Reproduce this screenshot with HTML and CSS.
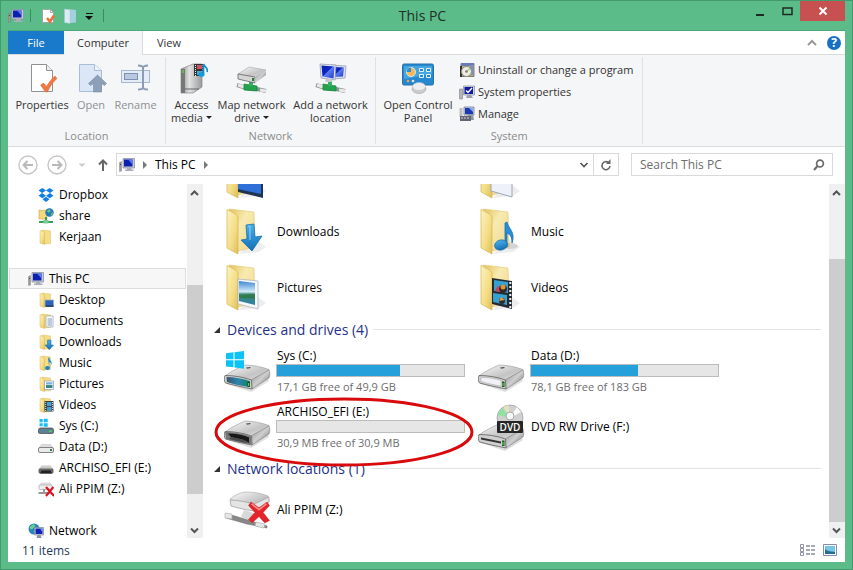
FILE: index.html
```html
<!DOCTYPE html>
<html lang="en">
<head>
<meta charset="utf-8">
<title>This PC</title>
<link rel="stylesheet" href="styles.css">
</head>
<body>
<svg class="defs" aria-hidden="true">
  <defs>
    <linearGradient id="gFront" x1="0" y1="0" x2="1" y2="1"><stop offset="0" stop-color="#fdf3bd"/><stop offset=".6" stop-color="#f3dc85"/><stop offset="1" stop-color="#dfbe58"/></linearGradient>
    <linearGradient id="gBack" x1="0" y1="0" x2="1" y2="1"><stop offset="0" stop-color="#e3c25f"/><stop offset=".4" stop-color="#f8eab0"/><stop offset="1" stop-color="#ecd68a"/></linearGradient>
    <linearGradient id="gTop" x1="0" y1="0" x2="1" y2="1"><stop offset="0" stop-color="#fafafa"/><stop offset=".6" stop-color="#c4c4c4"/><stop offset="1" stop-color="#e9e9e9"/></linearGradient>
    <linearGradient id="gSide" x1="0" y1="0" x2="1" y2="1"><stop offset="0" stop-color="#8a8a8a"/><stop offset=".5" stop-color="#cfcfcf"/><stop offset="1" stop-color="#5d5d5d"/></linearGradient>
    <linearGradient id="gTeal" x1="0" y1="0" x2="1" y2="0"><stop offset="0" stop-color="#38536c"/><stop offset=".5" stop-color="#2b86ad"/><stop offset="1" stop-color="#16806a"/></linearGradient>
    <linearGradient id="gBlue" x1="0" y1="0" x2="0" y2="1"><stop offset="0" stop-color="#4ab0ea"/><stop offset="1" stop-color="#126fb8"/></linearGradient>
    <linearGradient id="gScreen" x1="0" y1="0" x2="1" y2="1"><stop offset="0" stop-color="#0a1fae"/><stop offset=".45" stop-color="#0f24c4"/><stop offset=".5" stop-color="#5d7df0"/><stop offset="1" stop-color="#1c35c9"/></linearGradient>
    <linearGradient id="gPhoto" x1="0" y1="0" x2="0" y2="1"><stop offset="0" stop-color="#3f87d4"/><stop offset=".45" stop-color="#d4ecfa"/><stop offset=".55" stop-color="#3d8a70"/><stop offset="1" stop-color="#2f7fae"/></linearGradient>
    <linearGradient id="gTower" x1="0" y1="0" x2="1" y2="0"><stop offset="0" stop-color="#8d8d8d"/><stop offset=".4" stop-color="#e2e2e2"/><stop offset="1" stop-color="#9a9a9a"/></linearGradient>
  </defs>

  <symbol id="pc" viewBox="0 0 16 16">
    <path d="M.5 5.500l2-1v9.500l-2 .5z" fill="#9a9a9a" stroke="#777" stroke-width=".4"/><path d="M1 7.500h1" stroke="#444"/>
    <path d="M4 1.500h11.500v9.500H4z" fill="#c3c9d6" stroke="#8d93a5" stroke-width=".8"/>
    <path d="M5 2.500h8.500v7H5z" fill="#0d1fae"/><path d="M9 2.500h4.500v5z" fill="#5c7bea"/>
    <path d="M8 11h4l.5 1.500h2V14H6v-1.500h2z" fill="#a9adb8"/>
  </symbol>
  <symbol id="folder" viewBox="0 0 16 16">
    <path d="M4 1l8.500 1v12.500l-6 .5z" fill="#f4dd86" stroke="#dcbf64" stroke-width=".5"/>
    <path d="M2 1.500L6.500 3v12.500L2 14z" fill="url(#gFront)" stroke="#d8b856" stroke-width=".5"/>
  </symbol>
  <symbol id="s-desktop" viewBox="0 0 16 16"><use href="#folder"/><path d="M7 8h8.500v6H7z" fill="#2a63b8" stroke="#a5adba" stroke-width=".8"/><path d="M7.500 13h8v2h-8z" fill="#294b77"/></symbol>
  <symbol id="s-docs" viewBox="0 0 16 16"><use href="#folder"/><path d="M8 3h7v11H8z" fill="#fff" stroke="#8fa4c2" stroke-width=".7"/><path d="M9.500 6h4.500M9.500 8h4.500M9.500 10h4.500M9.500 12h4.500" stroke="#5d7ca8" stroke-width=".8"/></symbol>
  <symbol id="s-down" viewBox="0 0 16 16"><use href="#folder"/><path d="M9.500 6h3.500v5h2.500L11.300 15.700 7 11h2.500z" fill="url(#gBlue)" stroke="#17639f" stroke-width=".5"/></symbol>
  <symbol id="s-music" viewBox="0 0 16 16"><use href="#folder"/><path d="M10 3l1.200-.4c0 3 3.800 3.400 2.300 8 .3-2.400-1-3-2.200-3.600V13" fill="#238ad0"/><ellipse cx="9.500" cy="13" rx="2.500" ry="2" fill="#1f82ca"/></symbol>
  <symbol id="s-pics" viewBox="0 0 16 16"><use href="#folder"/><path d="M6.500 5h9v8.500h-9z" fill="#fff" stroke="#8e9bad" stroke-width=".7"/><path d="M8 6.500h6.500v5.500H8z" fill="url(#gPhoto)"/></symbol>
  <symbol id="s-video" viewBox="0 0 16 16"><use href="#folder"/><path d="M6.500 4h9v10.500h-9z" fill="#353e48"/><path d="M9 5h4.500v4H9zM9 10h4.500v4H9z" fill="#4aa0cd"/><path d="M7.700 5v9M14.600 5v9" stroke="#e6e6e6" stroke-dasharray="1 1"/></symbol>
  <symbol id="dropbox" viewBox="0 0 16 16"><path fill="#0d7de8" d="M4.500 1L8 3.600 4 6.100.5 3.600zM11.500 1L15.500 3.600 12 6.100 8 3.600zM.5 8.700L4 6.100 8 8.700 4.500 11.300zM12 6.100l3.500 2.600-4 2.600L8 8.700zM4.500 12.200L8 9.700l3.500 2.500L8 15z"/></symbol>
  <symbol id="share" viewBox="0 0 16 16"><path d="M1 2l3 .6 5-.6v9H1z" fill="#f2d77c" stroke="#c9a646" stroke-width=".6"/><circle cx="11.500" cy="4.500" r="4.200" fill="#2378bb"/><path d="M8.500 3l3-2 1.500 2-2 2zm4 3l2-2 .5 2-2 2z" fill="#63c183"/><path d="M8 9v4" stroke="#3a9b57" stroke-width="2"/><path d="M1 14h14" stroke="#39a05b" stroke-width="2"/><path d="M5.500 12h5v3.500h-5z" fill="#7dc993"/></symbol>
  <symbol id="s-drive" viewBox="0 0 16 16"><path d="M3.500 5.500h9l3 4H.5z" fill="#ddd" stroke="#bbb" stroke-width=".5"/><rect x=".5" y="8.500" width="15" height="5" rx="1.500" fill="#e9e9e9" stroke="#777" stroke-width=".9"/><path d="M12 10h2v2h-2z" fill="#2c7c4c"/></symbol>
  <symbol id="s-sys" viewBox="0 0 16 16"><path d="M1.500 1h3.200v3.200H1.500zM5.700.7h4v3.500h-4zM1.500 5.200h3.200v3H1.500zM5.700 5.200h4v3.500h-4z" fill="#19bdf0"/><path d="M2 9h12l1.500 2H.5z" fill="#b8bcc0"/><rect x=".5" y="10.500" width="15" height="5" rx="1.300" fill="#5c8197" stroke="#555" stroke-width=".8"/><path d="M11 12.500h3v1.500h-3z" fill="#47d25c"/></symbol>
  <symbol id="s-slot" viewBox="0 0 16 16"><path d="M3.500 5.500h9l3 4H.5z" fill="#ccc"/><rect x=".5" y="8.500" width="15" height="5" rx="1.500" fill="#666"/><path d="M2 13.500l1.500-3h9l1.500 3z" fill="#222"/></symbol>
  <symbol id="cross" viewBox="0 0 20 20"><path d="M3 1l7 5 7-5 2 3-5.500 6L19 17l-4 2-5-5.500L4 19l-3-3 5.500-6L1 4z" fill="#e3242a" stroke="#c9262b" stroke-width=".6"/><path d="M3.500 2.500l6.500 5 6.500-5" fill="none" stroke="#ff8b85" stroke-width="1.500"/></symbol>
  <symbol id="s-netx" viewBox="0 0 16 16"><path d="M3 1.500h9l2 3H1z" fill="#ddd"/><rect x="1" y="4" width="13" height="4.500" rx="1" fill="#eee" stroke="#aaa" stroke-width=".7"/><path d="M.5 12h11M6 8v4" stroke="#999" stroke-width="2"/><path d="M8 6l8 9M15.500 6L8 15" stroke="#df1420" stroke-width="2.200"/></symbol>
  <symbol id="network" viewBox="0 0 16 16"><circle cx="6" cy="6" r="5.500" fill="#2387b8"/><path d="M1.500 4l4-3 2 2-3 3-2 .5zm4 4l3-1 1 3-3 1z" fill="#68cf91"/><path d="M6.500 4.500h9v7.500h-9z" fill="#d7dbe5" stroke="#777f98" stroke-width=".7"/><path d="M7.500 5.500h7v5.500h-7z" fill="#0f22b8"/><path d="M12 5.500h2.500v4z" fill="#7290ed"/><path d="M9.500 12h3l1 3h-5z" fill="#8a92a5"/></symbol>
  <symbol id="s-props" viewBox="0 0 16 16"><path d="M1.500 1.500h8l3 3v10h-11z" fill="#fff" stroke="#9a9a9a" stroke-width=".8"/><path d="M9.500 1.500v3h3" fill="none" stroke="#9a9a9a" stroke-width=".8"/><path d="M6 10l3 3.500L13 7.500" fill="none" stroke="#e8703a" stroke-width="2.600"/></symbol>
  <symbol id="s-newfolder" viewBox="0 0 16 16"><path d="M4 1l9 1v12.500L7 15z" fill="#a4cfdc"/><path d="M1.500 1L7 2v13.500L1.500 14.500z" fill="#dcebf6" stroke="#a8c3d6" stroke-width=".5"/></symbol>

  <symbol id="bigfolder" viewBox="0 0 48 48">
    <path d="M30 30l12 9-7 5-20 2z" fill="#000" opacity=".07"/>
    <path d="M5 1l25 3 1 35-17 4z" fill="url(#gBack)" stroke="#e0c675" stroke-width=".6"/>
    <path d="M3 1.500c6 3 10 5 11 7.500v37L3 40z" fill="url(#gFront)" stroke="#d6b552" stroke-width=".7"/>
  </symbol>
  <symbol id="b-desktop" viewBox="0 0 48 48"><use href="#bigfolder"/><path d="M14 20l25-3v29l-25-6z" fill="#20344f"/><path d="M14 22l23-3v23l-23-5z" fill="#2f6fd8"/></symbol>
  <symbol id="b-docs" viewBox="0 0 48 48"><use href="#bigfolder"/><path d="M13 12l21-2v35l-21-6z" fill="#eef1f8" stroke="#9aa5bb"/></symbol>
  <symbol id="b-down" viewBox="0 0 48 48"><use href="#bigfolder"/><path d="M22 17l8-1 1 13 7-1-10 15-11-11 6-1z" fill="url(#gBlue)" stroke="#0f67a8" stroke-width=".7"/><path d="M24 18.500l2-.5v14" fill="none" stroke="#8fd3f5"/></symbol>
  <symbol id="b-music" viewBox="0 0 48 48"><use href="#bigfolder"/><ellipse cx="32" cy="38" rx="8" ry="3" opacity=".1"/><path d="M27 15l2-1c1 6 9 10 5 21 0-6-2-9-5-10v14h-2z" fill="#2490dc" stroke="#0f66ab" stroke-width=".7"/><ellipse cx="23" cy="37" rx="6.500" ry="5" transform="rotate(-15 23 37)" fill="url(#gBlue)" stroke="#1165a6" stroke-width=".7"/></symbol>
  <symbol id="b-pics" viewBox="0 0 48 48"><use href="#bigfolder"/><path d="M14 15l20 2v28l-20-5z" fill="#f6f8fa" stroke="#a5adb7" stroke-width=".7"/><path d="M15 17l16 2v22l-16-4z" fill="url(#gPhoto)"/><path d="M15 31c5 2 10-3 16 0v4c-6-2-11 1-16-2z" fill="#2f7b4c"/></symbol>
  <symbol id="b-video" viewBox="0 0 48 48"><use href="#bigfolder"/><path d="M14 14l20 3v28l-20-5z" fill="#252a30"/><path d="M16 16l14 2v11l-14-2zM15 29l14 2v10l-14-3z" fill="#36a0d0"/><circle cx="25" cy="25" r="4" fill="#302a25"/><circle cx="25" cy="23" r="2.500" fill="#e89034"/><circle cx="24" cy="37" r="3" fill="#302a25"/><path d="M17 27l3-6 2 7z" fill="#d43d54"/><path d="M21 37l2-4 4 3z" fill="#ec9c35"/><path d="M32.300 18v26" stroke="#f1f1f1" stroke-width="2" stroke-dasharray="2 2"/></symbol>

  <symbol id="drivebody" viewBox="0 0 48 48">
    <path d="M3 37l24 8 18-11-2-3z" opacity=".13"/>
    <path d="M1 29c5-4 13-8 20-11 8 0 17 2 24 4.500v1L27 34z" fill="url(#gTop)" stroke="#999" stroke-width=".6"/>
    <path d="M27 33l18-10c1 2 1 6 0 8L28 42z" fill="url(#gSide)" stroke="#777" stroke-width=".5"/>
    <path d="M1 28.500c9 0 18 1.500 26.500 4.500L28 42C18 40 9 38 1.500 36 0 34 0 31 1 28.500z" fill="#cfcfcf" stroke="#6b6b6b" stroke-width=".9"/>
    <path d="M22 20.500l4-.5 1 1-4 .8z" fill="#555"/>
  </symbol>
  <symbol id="b-drive" viewBox="0 0 48 48"><use href="#drivebody"/><path d="M3 30.500c7 0 14 1 20 3v5.500C16 38 9 36 3 34.500z" fill="#f1f1f7" stroke="#aaa" stroke-width=".5"/><path d="M24 34.500h2.500v5.500H24z" fill="#1d5c25"/><path d="M25 36v3" stroke="#6fe05b"/></symbol>
  <symbol id="b-sys" viewBox="0 0 48 48"><use href="#drivebody"/><path d="M2.500 30c7 0 15 1.500 23 4v6C17 39 9 37 3 35z" fill="url(#gTeal)"/><path d="M23.500 34.500H26v5.500h-2.500z" fill="#174b24"/><path d="M24.700 36v3" stroke="#5fe94b"/><path d="M2 6.300l7.500-1v7H2zM10.500 5.200L20 4v8.300h-9.500zM2 13.300h7.500v7L2 19.400zM10.500 13.300H20v8.400l-9.500-1.300z" fill="#0cc3f7"/></symbol>
  <symbol id="b-slot" viewBox="0 0 48 48"><use href="#drivebody"/><path d="M1 29c9 0 18 1.500 26 4.500l.5 8C18 40 9 38 2 36z" fill="#777"/><path d="M4 30.500c8 0 15 1.500 21 4v5.500l-5-3-13-3z" fill="#181818"/><path d="M7 34l13 3 4 3.500L5 36z" fill="#4a4a4a"/></symbol>
  <symbol id="b-netx" viewBox="0 0 48 48"><path d="M6 13c5-4 9-6 15-7 8 0 16 1 23 4l1 5-15 9z" fill="url(#gTop)" stroke="#aaa" stroke-width=".6"/><path d="M6 14c8 0 16 2 24 4l15-7v5l-15 9c-8-1-16-3-23-5z" fill="#e4e4e4" stroke="#999" stroke-width=".7"/><path d="M20 24l13 4-8 6-8-3z" fill="#d8d8d8"/><path d="M2 28l9 2 16 5 16 5v2l-20-4L2 32z" fill="#888" stroke="#666" stroke-width=".5"/><path d="M1 27l7 1v5l-7-1zM32 36l9 2-1 4-9-2z" fill="#e6e6e6" stroke="#aaa" stroke-width=".6"/><use href="#cross" x="23" y="15" width="24" height="23"/></symbol>

  <symbol id="r-props" viewBox="0 0 32 32"><path d="M5.500 2.500h15l6 6v21h-21z" fill="#fff" stroke="#919191"/><path d="M20.500 2.500v6h6" fill="#eee" stroke="#919191"/><path d="M14.500 23l3-2 3 3.500c2.500-4 5-8 8.500-10.500l2 2.500c-4 3.500-7 8-9.500 13.500h-2z" fill="#ed7842" stroke="#d96431" stroke-width=".5"/></symbol>
  <symbol id="r-open" viewBox="0 0 32 32"><path d="M4.500 2.500h15l7 6v21h-22z" fill="#dbe7f6" stroke="#a9bdd7"/><path d="M19.500 2.500v6h7" fill="#eef4fb" stroke="#a9bdd7"/><path d="M22.500 13l9 8.500-2 2-3-2V30h-8v-8.500l-3 2-2-2z" fill="#8e9fb8" stroke="#7789a4" stroke-width=".6"/></symbol>
  <symbol id="r-rename" viewBox="0 0 32 32"><rect x="1.500" y="8.500" width="28" height="12" fill="#e3ecf7" stroke="#a7b7cd"/><rect x="4.500" y="11.500" width="13" height="6" fill="#b9c8df" stroke="#7b91b5"/><path d="M18 3.500c3 0 5 .5 5 2.500v19c0 2-2 2.500-5 2.500M28 3.500c-3 0-5 .5-5 2.500v19c0 2 2 2.500 5 2.500" fill="none" stroke="#8c9cb5" stroke-width="2"/></symbol>
  <symbol id="r-media" viewBox="0 0 32 32"><path d="M5 7L17 2h9v23l-9 6H5z" fill="url(#gTower)" stroke="#868686" stroke-width=".7"/><path d="M5 7h4v24H5z" fill="#777"/><path d="M6 8h2v3H6z" fill="#5fbe4a"/><path d="M9 27h14" stroke="#666"/><path d="M18 2h10v12H18z" fill="#343434"/><path d="M21 3h5v4h-5z" fill="#cf5362"/><path d="M21 9h5v4h-5z" fill="#49a9d5"/><path d="M19.500 3v11M27 3v11" stroke="#eee" stroke-dasharray="1 1"/><path d="M27.500 12V2c.5 3 5.500 4 3.500 8" fill="none" stroke="#0b8ed4" stroke-width="1.600"/><ellipse cx="25.500" cy="12.500" rx="3" ry="2.300" fill="#119ce0"/></symbol>
  <symbol id="r-cable" viewBox="0 0 32 32"><path d="M1 23l9 3 11 1 9 2" fill="none" stroke="#8b9690" stroke-width="4"/><path d="M2 23l6 2M24 28l6 1" stroke="#e7e9e8" stroke-width="3"/><path d="M8 22l13 2v5l-13-1z" fill="#22a44e" stroke="#178039" stroke-width=".7"/><path d="M13 18h4v6h-4z" fill="#36ae5c"/></symbol>
  <symbol id="r-map" viewBox="0 0 32 32"><use href="#r-cable"/><path d="M2 12L13 5l17 3-11 8z" fill="url(#gTop)" stroke="#999" stroke-width=".5"/><path d="M2 12l17 3v6L2 17z" fill="#d5d5d5" stroke="#666" stroke-width=".8"/><path d="M19 15l11-7v5l-11 8z" fill="url(#gSide)"/><path d="M16 16h2v3h-2z" fill="#2d7c34"/></symbol>
  <symbol id="r-addloc" viewBox="0 0 32 32"><use href="#r-cable"/><path d="M16 3l15 1-1 12-13 1z" fill="#dce1ee" stroke="#8c95ad" stroke-width=".7"/><path d="M18 5l11 .5-1 9-10 .5z" fill="url(#gScreen)"/><path d="M5 2l16 1-1 15-14-2z" fill="#e2e6f1" stroke="#8c95ad" stroke-width=".7"/><path d="M6.500 3.500l13 1-1 12-11-2z" fill="url(#gScreen)"/><path d="M11 17h5l2 3h-8z" fill="#c3c7d0"/></symbol>
  <symbol id="r-panel" viewBox="0 0 32 32"><ellipse cx="17" cy="27" rx="7" ry="4.500" fill="#ccc" stroke="#999" stroke-width=".5"/><rect x=".5" y="2" width="31" height="21" rx="1.500" fill="#2689cf" stroke="#2871a8"/><path d="M2 4h28v8L2 17z" fill="#47a5df"/><circle cx="9" cy="10" r="4.500" fill="#f3b658" stroke="#fff" stroke-width=".7"/><path d="M9 10V5.500a4.500 4.500 0 0 0-4.500 4.500z" fill="#2f8fce"/><path d="M17.500 6.500h4v3h-4zM24.500 6.500h4v3h-4zM17.500 12.500h4v3h-4zM24.500 12.500h4v3h-4z" fill="#2889ca" stroke="#e4f4ff"/><circle cx="6" cy="19" r="1.300" fill="#f2a24c"/><circle cx="11" cy="19" r="1.300" fill="#e5e5e5"/><ellipse cx="17" cy="24.500" rx="6.500" ry="4" fill="#eee" stroke="#bbb" stroke-width=".5"/></symbol>
  <symbol id="s-uninstall" viewBox="0 0 16 16"><path d="M2 1.500h13v13H2z" fill="#bcae87" stroke="#555" stroke-width=".7"/><path d="M2 1h13v3H2z" fill="#6b7bb5"/><path d="M11 3h4v10h-4z" fill="#8290ae"/><path d="M1 4h2v11H1z" fill="#333"/><circle cx="7.500" cy="9.500" r="5" fill="#ececdf" stroke="#8d8d80"/><path d="M7.500 9.500l3-4 1.500 2z" fill="#a9cbaa"/><circle cx="7.500" cy="9.500" r="1.300" fill="#777"/></symbol>
  <symbol id="s-sysprops" viewBox="0 0 16 16"><path d="M.5 5h3v10h-3z" fill="#b5b5b5" stroke="#777" stroke-width=".5"/><path d="M4.500 2h11v9h-11z" fill="#d5d9e2" stroke="#858da1" stroke-width=".7"/><path d="M5.500 3h8.500v7H5.500z" fill="#1019a4"/><path d="M7 6.500l2 2L13 4" fill="none" stroke="#fff" stroke-width="1.500"/><path d="M8 11h4l2 3H7z" fill="#9da2af"/></symbol>
  <symbol id="s-manage" viewBox="0 0 16 16"><path d="M.5 2h3v9h-3z" fill="#bcbcbc"/><path d="M5 1h10v8H5z" fill="#ccd2e1" stroke="#777f96" stroke-width=".8"/><path d="M6 2h8v6H6z" fill="#183ab7"/><path d="M10 2h4v4z" fill="#8fa6ec"/><path d="M8 8h6l1 6h-3z" fill="#9197a5"/><path d="M1 10h11v5H1z" fill="#5f6572"/><path d="M2 12h9" stroke="#d8d8d8" stroke-dasharray="2 1"/></symbol>
</svg>

<div class="window">
  <header class="titlebar">
    <div class="quick">
      <svg class="i16"><use href="#pc"/></svg><span class="qsep"></span>
      <button aria-label="Properties"><svg class="i16"><use href="#s-props"/></svg></button>
      <button aria-label="New folder"><svg class="i16"><use href="#s-newfolder"/></svg></button>
      <button aria-label="Customize toolbar"><svg class="i8" viewBox="0 0 8 8"><path d="M1 1.500h7" stroke="#111"/><path d="M0 4h8L4 8z" fill="#111"/></svg></button>
      <span class="qsep"></span>
    </div>
    <h1>This PC</h1>
    <div class="controls">
      <button class="ctl" aria-label="Minimize"><svg viewBox="0 0 12 12"><path d="M2 10h8" stroke="#1c2b22" stroke-width="2"/></svg></button>
      <button class="ctl" aria-label="Maximize"><svg viewBox="0 0 12 12"><path d="M2 3h9v6.500H2z" fill="none" stroke="#1c2b22" stroke-width="1.500"/></svg></button>
      <button class="ctl close" aria-label="Close"><svg viewBox="0 0 12 12"><path d="M2.500 2.500l7 7M9.500 2.500l-7 7" stroke="#fff" stroke-width="2"/></svg></button>
    </div>
  </header>

  <div class="client">
    <nav class="tabs">
      <button class="tab file">File</button>
      <button class="tab active">Computer</button>
      <button class="tab">View</button>
      <div class="tabtools">
        <button aria-label="Collapse ribbon"><svg class="i12" viewBox="0 0 12 12"><path d="M2 8l4-4 4 4" fill="none" stroke="#999" stroke-width="2"/></svg></button>
        <button class="help" aria-label="Help">?</button>
      </div>
    </nav>

    <section class="ribbon">
      <div class="group">
        <div class="items">
          <button class="big w-props"><svg class="i32"><use href="#r-props"/></svg><span>Properties</span></button>
          <button class="big dim w-open" disabled><svg class="i32"><use href="#r-open"/></svg><span>Open</span></button>
          <button class="big dim w-rename" disabled><svg class="i32"><use href="#r-rename"/></svg><span>Rename</span></button>
        </div>
        <div class="caption">Location</div>
      </div>
      <div class="group">
        <div class="items">
          <button class="big w-media"><svg class="i32"><use href="#r-media"/></svg><span>Access<br>media<i class="drop"></i></span></button>
          <button class="big w-map"><svg class="i32"><use href="#r-map"/></svg><span>Map network<br>drive<i class="drop"></i></span></button>
          <button class="big w-add"><svg class="i32"><use href="#r-addloc"/></svg><span>Add a network<br>location</span></button>
        </div>
        <div class="caption">Network</div>
      </div>
      <div class="group">
        <div class="items">
          <button class="big w-panel"><svg class="i32"><use href="#r-panel"/></svg><span>Open Control<br>Panel</span></button>
          <div class="smalls">
            <button class="small"><svg class="i16"><use href="#s-uninstall"/></svg>Uninstall or change a program</button>
            <button class="small"><svg class="i16"><use href="#s-sysprops"/></svg>System properties</button>
            <button class="small"><svg class="i16"><use href="#s-manage"/></svg>Manage</button>
          </div>
        </div>
        <div class="caption">System</div>
      </div>
    </section>

    <div class="navrow">
      <button class="round" aria-label="Back"><svg viewBox="0 0 20 20"><circle cx="10" cy="10" r="9" fill="none" stroke="#c6c6c6" stroke-width="1.400"/><path d="M15 10H6M9.500 6L5.500 10l4 4" fill="none" stroke="#b9b9b9" stroke-width="2"/></svg></button>
      <button class="round" aria-label="Forward"><svg viewBox="0 0 20 20"><circle cx="10" cy="10" r="9" fill="none" stroke="#c6c6c6" stroke-width="1.400"/><path d="M5 10h9M10.500 6l4 4-4 4" fill="none" stroke="#b9b9b9" stroke-width="2"/></svg></button>
      <button class="recent" aria-label="Recent locations"><svg class="i8" viewBox="0 0 8 8"><path d="M.5 2.500h7L4 6z" fill="#ccc"/></svg></button>
      <button class="up" aria-label="Up"><svg viewBox="0 0 12 14"><path d="M6 13V3M2 6.500l4-4 4 4" fill="none" stroke="#666" stroke-width="2"/></svg></button>
      <div class="address">
        <svg class="i16"><use href="#pc"/></svg>
        <svg class="i8 chev" viewBox="0 0 8 8"><path d="M2 0l4 4-4 4z" fill="#777"/></svg>
        <button class="crumb">This PC</button>
        <svg class="i8 chev" viewBox="0 0 8 8"><path d="M2 0l4 4-4 4z" fill="#777"/></svg>
        <button class="history" aria-label="Previous locations"><svg class="i12" viewBox="0 0 12 12"><path d="M2.500 4L6 7.500 9.500 4" fill="none" stroke="#555" stroke-width="1.600"/></svg></button>
        <button class="refresh" aria-label="Refresh"><svg class="i12" viewBox="0 0 12 12"><path d="M10 7a4 4 0 1 1-1.500-3.500" fill="none" stroke="#666" stroke-width="1.500"/><path d="M10.500 0v5H6z" fill="#666"/></svg></button>
      </div>
      <div class="search">
        <input type="search" aria-label="Search This PC" placeholder="Search This PC">
        <svg class="i12" viewBox="0 0 12 12"><circle cx="7" cy="4.500" r="3.400" fill="none" stroke="#6b6b6b" stroke-width="1.700"/><path d="M4.500 7L1 11" stroke="#6b6b6b" stroke-width="2"/></svg>
      </div>
    </div>

    <div class="main">
      <nav class="tree">
        <a href="#" class="node child"><svg class="i16"><use href="#dropbox"/></svg>Dropbox</a>
        <a href="#" class="node child"><svg class="i16"><use href="#share"/></svg>share</a>
        <a href="#" class="node child"><svg class="i16"><use href="#folder"/></svg>Kerjaan</a>
        <a href="#" class="node root gap selected"><svg class="i16"><use href="#pc"/></svg>This PC</a>
        <a href="#" class="node child"><svg class="i16"><use href="#s-desktop"/></svg>Desktop</a>
        <a href="#" class="node child"><svg class="i16"><use href="#s-docs"/></svg>Documents</a>
        <a href="#" class="node child"><svg class="i16"><use href="#s-down"/></svg>Downloads</a>
        <a href="#" class="node child"><svg class="i16"><use href="#s-music"/></svg>Music</a>
        <a href="#" class="node child"><svg class="i16"><use href="#s-pics"/></svg>Pictures</a>
        <a href="#" class="node child"><svg class="i16"><use href="#s-video"/></svg>Videos</a>
        <a href="#" class="node child"><svg class="i16"><use href="#s-sys"/></svg>Sys (C:)</a>
        <a href="#" class="node child"><svg class="i16"><use href="#s-drive"/></svg>Data (D:)</a>
        <a href="#" class="node child"><svg class="i16"><use href="#s-slot"/></svg>ARCHISO_EFI (E:)</a>
        <a href="#" class="node child"><svg class="i16"><use href="#s-netx"/></svg>Ali PPIM (Z:)</a>
        <a href="#" class="node root gap"><svg class="i16"><use href="#network"/></svg>Network</a>
      </nav>
      <div class="scroll">
        <svg class="arrow" viewBox="0 0 16 16"><path d="M4 11l3.500-3.500L11 11" fill="none" stroke="#555" stroke-width="2"/></svg>
        <div class="track tree-track"><div class="thumb"></div></div>
        <svg class="arrow" viewBox="0 0 16 16"><path d="M4 6.500L7.500 10 11 6.500" fill="none" stroke="#555" stroke-width="2"/></svg>
      </div>

      <main class="content">
        <div class="scrolled">
          <div class="tiles">
            <div class="tile"><svg class="i48" role="img" aria-label="Desktop"><use href="#b-desktop"/></svg></div>
            <div class="tile"><svg class="i48" role="img" aria-label="Documents"><use href="#b-docs"/></svg></div>
            <div class="tile"><svg class="i48"><use href="#b-down"/></svg><div class="info">Downloads</div></div>
            <div class="tile"><svg class="i48"><use href="#b-music"/></svg><div class="info">Music</div></div>
            <div class="tile"><svg class="i48"><use href="#b-pics"/></svg><div class="info">Pictures</div></div>
            <div class="tile"><svg class="i48"><use href="#b-video"/></svg><div class="info">Videos</div></div>
          </div>
          <h2><svg class="i8" viewBox="0 0 8 8"><path d="M7 1v6H1z" fill="#333"/></svg><span>Devices and drives (4)</span></h2>
          <div class="tiles">
            <div class="tile"><svg class="i48"><use href="#b-sys"/></svg><div class="info">Sys (C:)<div class="bar"><div class="used" style="width:66%"></div></div><span class="free">17,1 GB free of 49,9 GB</span></div></div>
            <div class="tile"><svg class="i48"><use href="#b-drive"/></svg><div class="info">Data (D:)<div class="bar"><div class="used" style="width:57%"></div></div><span class="free">78,1 GB free of 183 GB</span></div></div>
            <div class="tile marked"><svg class="i48"><use href="#b-slot"/></svg><div class="info">ARCHISO_EFI (E:)<div class="bar"></div><span class="free">30,9 MB free of 30,9 MB</span></div>
              <svg class="ring" viewBox="0 0 260 72"><ellipse cx="130" cy="36" rx="128" ry="33" fill="none" stroke="#d90a0c" stroke-width="3"/></svg>
            </div>
            <div class="tile">
              <svg class="i48" viewBox="0 0 48 48"><g transform="translate(0 3)"><use href="#drivebody" width="48" height="48"/><path d="M3 31.500l20 4v2L3 33.500z" fill="#333"/><path d="M24 34.500h2.500v5.500H24z" fill="#1d5c25"/><path d="M25 36v3" stroke="#6fe05b"/></g><circle cx="32" cy="15" r="13" fill="#d0d0d0" stroke="#9a9a9a" stroke-width=".7"/><path d="M32 15L19.500 12a13 13 0 0 1 5-7z" fill="#8fe3a2"/><path d="M32 15L25.500 4l5-2z" fill="#e6e2c0"/><path d="M32 15l7-11 4 5z" fill="#fafafa"/><circle cx="32" cy="13" r="4" fill="#f6f6f6" stroke="#aaa"/><rect x="19" y="18" width="26" height="12" rx="1" fill="#262626"/><text x="32" y="28" text-anchor="middle" class="dvd-text">DVD</text></svg>
              <div class="info">DVD RW Drive (F:)</div>
            </div>
          </div>
          <h2><svg class="i8" viewBox="0 0 8 8"><path d="M7 1v6H1z" fill="#333"/></svg><span>Network locations (1)</span></h2>
          <div class="tiles">
            <div class="tile"><svg class="i48"><use href="#b-netx"/></svg><div class="info">Ali PPIM (Z:)</div></div>
          </div>
        </div>
      </main>
      <div class="scroll">
        <svg class="arrow" viewBox="0 0 16 16"><path d="M4 11l3.500-3.500L11 11" fill="none" stroke="#555" stroke-width="2"/></svg>
        <div class="track content-track"><div class="thumb"></div></div>
        <svg class="arrow" viewBox="0 0 16 16"><path d="M4 6.500L7.500 10 11 6.500" fill="none" stroke="#555" stroke-width="2"/></svg>
      </div>
    </div>

    <footer class="status">
      <span>11 items</span>
      <button aria-label="Details view"><svg class="i16" viewBox="0 0 16 16"><path d="M1.500 1.500h3v3h-3zM1.500 5.500h3v3h-3zM1.500 9.500h3v3h-3z" fill="#fff" stroke="#8a93a8"/><path d="M7 3h9M7 7h9M7 11h9" stroke="#44536e" stroke-dasharray="4 1"/></svg></button>
      <button aria-label="Large icons view"><svg class="i16" viewBox="0 0 16 16"><path d="M1.500 1.500h13v11h-13z" fill="#fff" stroke="#7f8db3"/><path d="M3 3h10v8H3z" fill="#76c4e8"/><path d="M3 6c3 3 6 2 10 3v2H3z" fill="#216f8d"/></svg></button>
    </footer>
  </div>
</div>
</body>
</html>
```
FILE: styles.css
```css
* { box-sizing: border-box; }
body { margin: 0; font: 12px/16px "Open Sans", "Noto Sans", sans-serif; color: #000; }
button { border: 0; padding: 0; margin: 0; background: none; font: inherit; color: inherit; display: flex; align-items: center; justify-content: center; }
svg { display: block; flex: none; }
.defs { position: absolute; width: 0; height: 0; }
.i8 { width: 8px; height: 8px; }
.i12 { width: 12px; height: 12px; }
.i16 { width: 16px; height: 16px; }
.i32 { width: 32px; height: 32px; }
.i48 { width: 48px; height: 48px; }

.window { height: 100vh; display: flex; flex-direction: column; background: #5bbc8a; border: 1px solid #439a6d; padding: 0 7px 7px; }
.titlebar { display: grid; grid-template-columns: 1fr auto 1fr; height: 29px; align-items: center; }
.titlebar h1 { margin: 0; padding-right: 8px; font-size: 14px; line-height: 20px; font-weight: 400; color: #1f2f27; }
.quick { display: flex; align-items: center; gap: 6px; }
.qsep { width: 1px; height: 13px; margin: 0 4px 0 0; background: #3c8a62; }
.quick > .qsep:last-child { margin-left: 4px; }
.controls { display: flex; justify-content: flex-end; align-self: start; }
.ctl { width: 27px; height: 20px; }
.ctl svg { width: 12px; height: 12px; }
.close { width: 45px; background: #c75050; }

.client { flex: 1; min-height: 0; display: flex; flex-direction: column; background: #fff; border-top: 1px solid #4fa87b; }
.tabs { display: flex; height: 24px; border-bottom: 1px solid #dadbdc; font-size: 11px; }
.tab { padding: 0 14px; color: #333; height: 24px; }
.tab.file { width: 56px; background: #1979ca; color: #fff; height: 23px; }
.tab.active { width: 79px; padding: 0; background: #f5f6f7; border-right: 1px solid #dadbdc; }
.tabtools { margin-left: auto; display: flex; align-items: center; gap: 9px; padding-right: 4px; }
.help { width: 14px; height: 14px; border-radius: 50%; background: #1870c5; color: #fff; font-size: 12px; font-weight: 700; line-height: 14px; }

.ribbon { display: flex; height: 92px; background: #f5f6f7; border-bottom: 1px solid #dadbdc; padding: 2px 0; color: #333; font-size: 11px; }
.group { display: flex; flex-direction: column; border-right: 1px solid #e0e1e3; padding: 0 5px; }
.items { display: flex; flex: 1; }
.caption { text-align: center; color: #8b8b8b; line-height: 16px; }
.big { flex-direction: column; justify-content: flex-start; line-height: 13px; padding-top: 5px; white-space: nowrap; }
.big span { margin-top: 4px; }
.dim { color: #8d9095; }
.w-props { width: 58px; }
.w-open { width: 40px; }
.w-rename { width: 49px; }
.w-media { width: 41px; }
.w-map { width: 79px; }
.w-add { width: 79px; }
.w-panel { width: 74px; }
.drop { display: inline-block; margin-left: 3px; vertical-align: 3px; border: 3px solid transparent; border-top-color: #222; border-bottom: 0; }
.smalls { padding: 2px 4px; }
.small { height: 22px; gap: 3px; }

.navrow { display: flex; align-items: center; height: 37px; padding: 0 12px 2px 10px; }
.round { width: 20px; height: 20px; margin-right: 9px; }
.round svg { width: 20px; height: 20px; }
.recent { width: 12px; }
.up { width: 12px; margin: 0 7px 0 9px; }
.up svg { width: 12px; height: 14px; }
.address { flex: 1; display: flex; align-items: center; height: 23px; border: 1px solid #d9d9d9; padding-left: 2px; }
.chev { margin: 0 6px; }
.history { width: 18px; height: 21px; margin-left: auto; }
.refresh { width: 25px; height: 21px; border-left: 1px solid #d9d9d9; }
.search { flex: 0 0 202px; display: flex; align-items: center; height: 23px; margin-left: 12px; padding: 0 7px 0 8px; border: 1px solid #d9d9d9; }
.search input { flex: 1; min-width: 0; border: 0; padding: 0; outline: 0; font: inherit; background: none; }
.search input::placeholder { color: #6d6d6d; opacity: 1; }

.main { flex: 1; min-height: 0; display: flex; }
.tree { flex: 0 0 179px; overflow: hidden; padding: 0 1px; }
.node { display: flex; align-items: center; gap: 5px; height: 21px; color: #000; text-decoration: none; white-space: nowrap; border: 1px solid transparent; }
.child { padding-left: 28px; }
.root { padding-left: 18px; }
.gap { margin-top: 21px; }
.selected { background: #f7f7f7; border-color: #dedede; }
.scroll { width: 16px; flex: none; display: flex; flex-direction: column; background: #f0f0f0; margin-bottom: 2px; }
.arrow { width: 16px; height: 16px; }
.track { flex: 1; display: flex; flex-direction: column; }
.thumb { flex: 1; background: #cdcdcd; }
.tree-track { padding: 85px 0 28px; }
.content-track { padding-top: 59px; }
.content { flex: 1; min-width: 0; overflow: hidden; padding: 0 8px 0 10px; }
.scrolled { margin-top: -36px; }
.tiles { display: grid; grid-template-columns: repeat(auto-fill, 254px); padding-left: 11px; }
.tile { display: flex; align-items: center; height: 56px; gap: 4px; }
.info { width: 189px; line-height: 16px; padding-left: 1px; }
.bar { height: 13px; margin: 0 0 2px -1px; border: 1px solid #bcbcbc; background: #e6e6e6; width: 189px; }
.used { height: 100%; background: #26a0da; }
.free { display: block; font-size: 11px; color: #6d6d6d; }
.content h2 { display: flex; align-items: center; gap: 6px; height: 27px; margin: 0; font-size: 14px; line-height: 20px; font-weight: 400; color: #1e3287; }
.content h2::after { content: ""; flex: 1; height: 1px; background: #e2e2e2; }
.marked { position: relative; }
.ring { position: absolute; left: -10px; top: -3px; width: 260px; height: 72px; pointer-events: none; }
.dvd-text { font: 600 10px "Open Sans", sans-serif; fill: #fff; }

.status { height: 22px; display: flex; align-items: center; gap: 7px; padding: 0 7px 0 14px; color: #1e395b; }
.status span { margin-right: auto; }
```
